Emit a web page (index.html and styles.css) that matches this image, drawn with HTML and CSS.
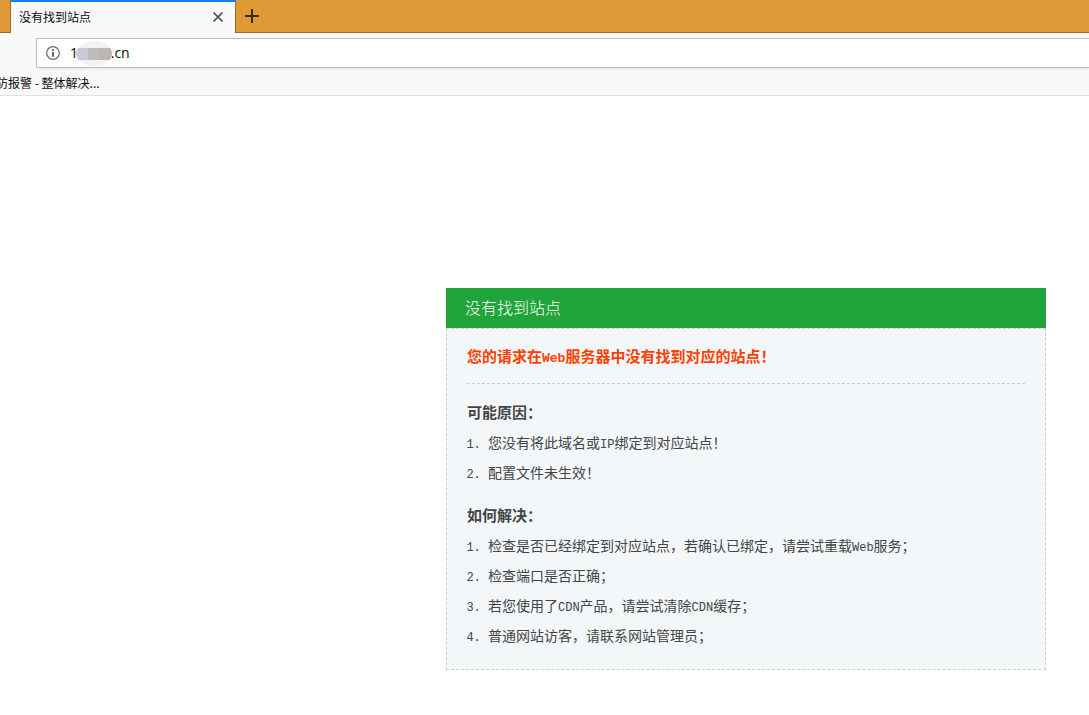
FILE: index.html
```html
<!DOCTYPE html>
<html lang="zh-CN">
<head>
    <meta charset="UTF-8">
    <meta name="viewport" content="width=device-width, initial-scale=1.0">
    <title>没有找到站点</title>
    <link rel="stylesheet" href="styles.css">
</head>
<body>

    <header class="browser">
        <div class="tabs">
            <div class="tab">
                <span class="tab-title">没有找到站点</span>
                <button type="button" class="tab-close" aria-label="关闭">
                    <svg width="12" height="12" viewBox="0 0 12 12"><path d="M1.5 1.5l9 9M10.5 1.5l-9 9" fill="none" stroke="#4a4a4a" stroke-width="1.7"/></svg>
                </button>
            </div>
            <button type="button" class="tab-new" aria-label="新标签页">
                <svg width="14" height="14" viewBox="0 0 14 14"><path d="M7 0v14M0 7h14" fill="none" stroke="#3b2a10" stroke-width="2"/></svg>
            </button>
        </div>
        <div class="address">
            <svg class="info" width="14" height="14" viewBox="0 0 14 14">
                <circle cx="7" cy="7" r="6.3" fill="none" stroke="#6a6a6a" stroke-width="1.2"/>
                <rect x="6.1" y="6" width="1.8" height="4.8" fill="#555"/>
                <rect x="6.1" y="3.1" width="1.8" height="1.8" fill="#555"/>
            </svg>
            <div class="url-wrap">
                <input type="text" class="url" aria-label="网址" value="1&nbsp;&nbsp;&nbsp;&nbsp;&nbsp;&nbsp;&nbsp;&nbsp;&nbsp;.cn">
                <span class="mosaic"></span>
            </div>
        </div>
        <nav class="bookmarks">
            <a href="#">防报警 - 整体解决...</a>
        </nav>
    </header>

    <main class="box">
        <h1>没有找到站点</h1>
        <div class="content">
            <p class="t1">您的请求在<span class="en">Web</span>服务器中没有找到对应的站点！</p>
            <h2>可能原因：</h2>
            <ol>
                <li>您没有将此域名或<span class="en">IP</span>绑定到对应站点！</li>
                <li>配置文件未生效！</li>
            </ol>
            <h2>如何解决：</h2>
            <ol>
                <li>检查是否已经绑定到对应站点，若确认已绑定，请尝试重载<span class="en">Web</span>服务；</li>
                <li>检查端口是否正确；</li>
                <li>若您使用了<span class="en">CDN</span>产品，请尝试清除<span class="en">CDN</span>缓存；</li>
                <li>普通网站访客，请联系网站管理员；</li>
            </ol>
        </div>
    </main>

</body>
</html>
```
FILE: styles.css
```css
* {
    margin: 0;
    padding: 0;
    box-sizing: border-box;
}

body {
    font-family: "Noto Sans CJK SC", sans-serif;
    font-size: 14px;
    color: #444;
    background-color: #fff;
    overflow-x: hidden;
}

button {
    display: flex;
    align-items: center;
    justify-content: center;
    border: none;
    background: none;
    cursor: pointer;
}

/* browser bar */
.browser {
    background-color: #f9f9fa;
    border-bottom: 1px solid #e1e1e2;
    color: #0c0c0d;
}

.tabs {
    display: flex;
    height: 33px;
    padding-left: 10px;
    background-color: #df9a38;
    box-shadow: inset 0 -1px #9c6b27;
}

.tab {
    display: flex;
    align-items: center;
    justify-content: space-between;
    width: 226px;
    padding: 0 11px 2px 8px;
    background-color: #f9f9fa;
    border-top: 2px solid #0a84ff;
    border-left: 1px solid #9c6b27;
    border-right: 1px solid #9c6b27;
}

.tab-title {
    font-size: 12px;
}

.tab-close {
    width: 12px;
    height: 12px;
}

.tab-new {
    width: 32px;
    height: 32px;
}

.address {
    display: flex;
    align-items: center;
    height: 30px;
    margin: 5px 0 0 36px;
    padding-left: 9px;
    background-color: #fff;
    border: 1px solid #bebebe;
    border-right: none;
    border-radius: 2px 0 0 2px;
    box-shadow: 0 1px 3px #e4e4e4;
}

.url-wrap {
    position: relative;
    flex: 1;
    margin-left: 10px;
}

.url {
    display: block;
    width: 100%;
    height: 28px;
    padding-bottom: 2px;
    border: none;
    outline: none;
    background: none;
    font-family: "Open Sans", sans-serif;
    font-size: 14px;
    color: #0c0c0d;
}

.mosaic {
    position: absolute;
    left: 6px;
    top: 2px;
    width: 36px;
    height: 25px;
    border-radius: 50%;
    background: linear-gradient(90deg, #c9ccd6 12px, #bdbdc0 12px, #bdbdc0 22px, #bcb6b3 22px) 0 7px / 100% 12px no-repeat #f2f2f2;
}

.bookmarks {
    display: flex;
    align-items: center;
    height: 27px;
    padding-top: 2px;
    overflow: hidden;
}

.bookmarks a {
    margin-left: -4px;
    font-size: 12px;
    color: #0c0c0d;
    text-decoration: none;
    white-space: nowrap;
}

/* message box */
.box {
    width: 600px;
    max-width: 100%;
    margin: 192px 43px 45px auto;
}

.box h1 {
    height: 40px;
    padding-left: 19px;
    background-color: #20a53a;
    color: #fff;
    font-size: 16px;
    font-weight: 300;
    line-height: 38px;
}

.content {
    padding: 0 20px 19px;
    background-color: #f3f7fa;
    border: 1px dashed #c9d7b9;
}

.t1 {
    border-bottom: 1px dashed #c9d0b9;
    color: #ff4000;
    font-size: 15px;
    font-weight: bold;
    line-height: 54px;
}

.content h2 {
    margin-top: 12px;
    font-size: 15px;
    line-height: 31px;
}

ol {
    padding-left: 21px;
}

li {
    line-height: 30px;
}

li::marker {
    font-family: "Liberation Mono", monospace;
    font-size: 12px;
}

.en {
    font-family: "Liberation Mono", monospace;
    font-size: 12px;
    line-height: 1;
}

.t1 .en {
    font-size: 13px;
}
```
